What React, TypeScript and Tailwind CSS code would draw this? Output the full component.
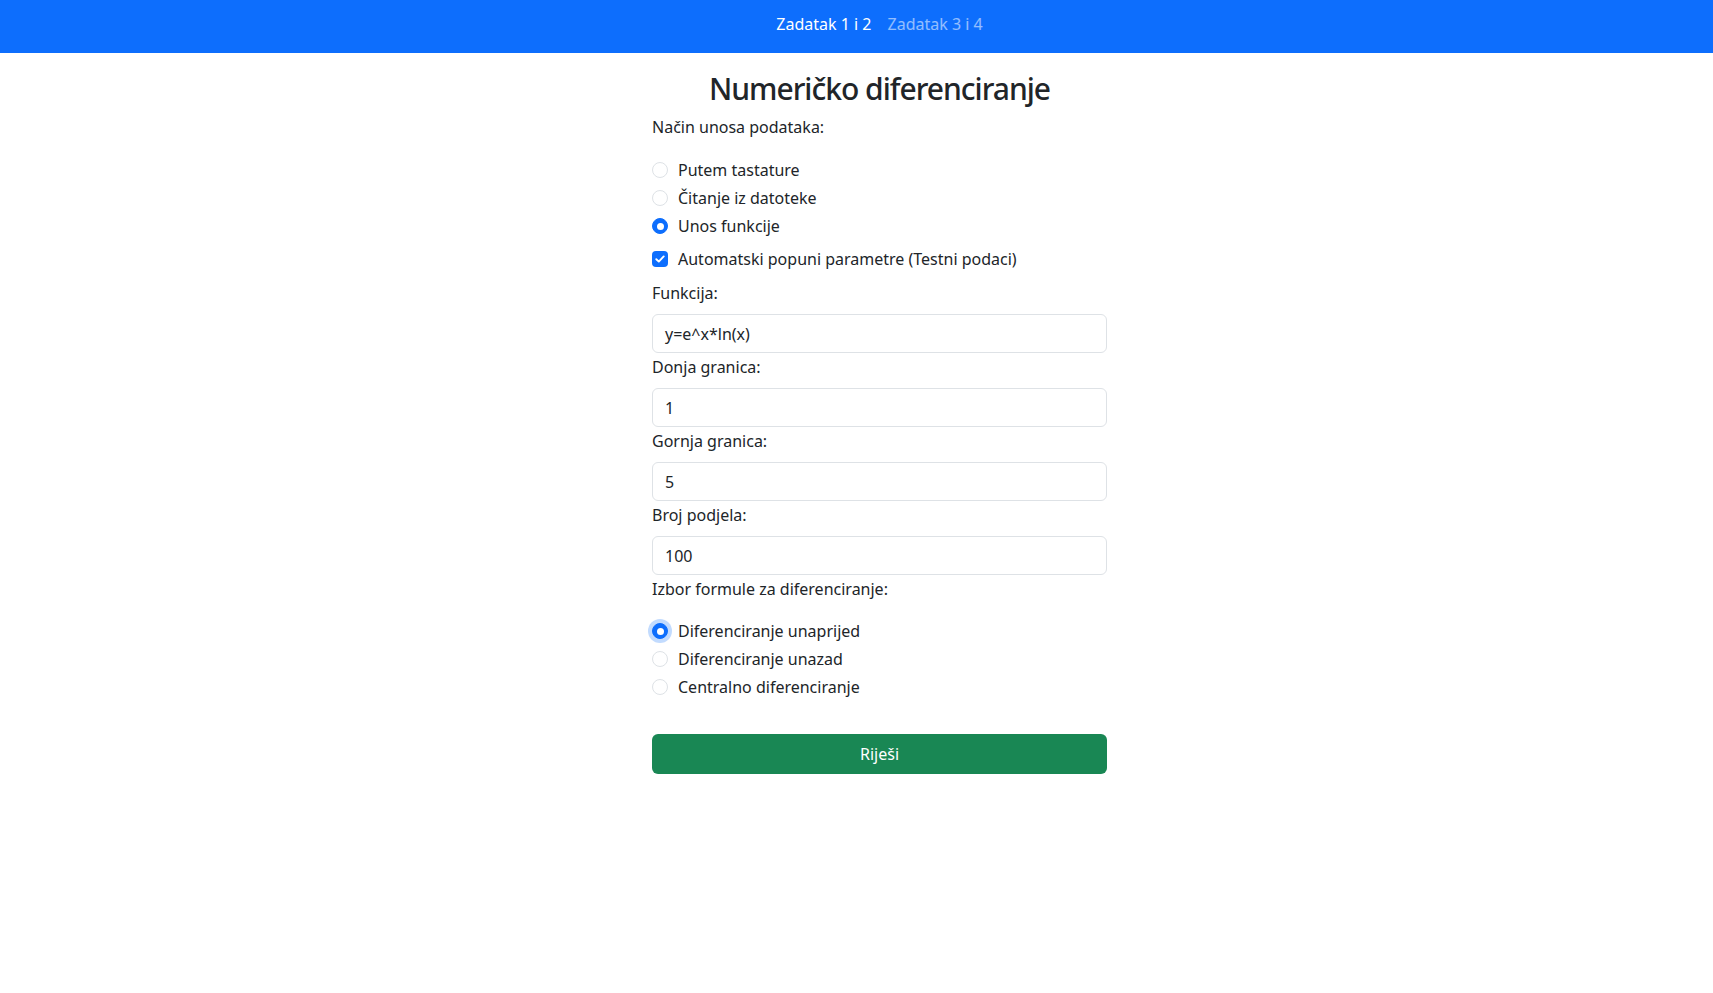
import { useState } from "react"

const font = { fontFamily: '"Noto Sans", "Open Sans", sans-serif' }

const Radio = ({ checked, focused, label }: { checked?: boolean; focused?: boolean; label: string }) => (
    <label className="flex items-center gap-2 h-6 text-base leading-6 text-[#212529]">
        <span
            className={
                "flex items-center justify-center w-4 h-4 rounded-full border " +
                (checked ? "bg-[#0d6efd] border-[#0d6efd] " : "bg-white border-[#dee2e6] ") +
                (focused ? "shadow-[0_0_0_4px_rgba(13,110,253,0.25)]" : "")
            }
        >
            {checked && <span className="w-[7px] h-[7px] rounded-full bg-white" />}
        </span>
        <span className="ml-[2px]">{label}</span>
    </label>
)

const Field = ({ label, value }: { label: string; value: string }) => (
    <div className="flex flex-col">
        <div className="mt-[2px] h-6 leading-6">{label}</div>
        <div className="mt-[9px] h-[39px] border border-[#dee2e6] rounded-[6px] px-3 flex items-center">
            <span>{value}</span>
        </div>
    </div>
)

const App = () => {
    const [mode] = useState("funkcija")

    return <div className="min-h-[993px] bg-white text-[#212529] text-base" style={font}>
        <nav className="h-[53px] bg-[#0d6efd]">
            <div className="ml-[652px] w-[455px] flex justify-center pt-[12px]">
                <a className="px-2 leading-6 text-white">Zadatak 1 i 2</a>
                <a className="px-2 leading-6 text-white/55">Zadatak 3 i 4</a>
            </div>
        </nav>
        <div className="ml-[652px] w-[455px] flex flex-col">
            <h2 className="mt-[17px] h-[38px] text-[30px] leading-[38px] tracking-[-1px] font-medium text-center">
                Numeričko diferenciranje
            </h2>
            <div className="mt-[7px] h-6 leading-6">Način unosa podataka:</div>
            <div className="mt-[19px] flex flex-col gap-1">
                <Radio label="Putem tastature" checked={mode === "tastatura"} />
                <Radio label="Čitanje iz datoteke" checked={mode === "datoteka"} />
                <Radio label="Unos funkcije" checked={mode === "funkcija"} />
            </div>
            <label className="mt-[9px] flex items-center gap-2 h-6 leading-6">
                <span className="flex items-center justify-center w-4 h-4 rounded-[4px] bg-[#0d6efd]">
                    <svg width="10" height="8" viewBox="0 0 10 8" fill="none">
                        <path d="M1.3 4.2 3.8 6.6 8.7 1.4" stroke="white" strokeWidth="1.9" strokeLinecap="round" strokeLinejoin="round" />
                    </svg>
                </span>
                <span className="ml-[2px]">Automatski popuni parametre (Testni podaci)</span>
            </label>
            <div className="mt-[10px] h-6 leading-6">Funkcija:</div>
            <div className="mt-[9px] h-[39px] border border-[#dee2e6] rounded-[6px] px-3 flex items-center">
                <span>y=e^x*ln(x)</span>
            </div>
            <Field label="Donja granica:" value="1" />
            <Field label="Gornja granica:" value="5" />
            <Field label="Broj podjela:" value="100" />
            <div className="mt-[2px] h-6 leading-6">Izbor formule za diferenciranje:</div>
            <div className="mt-[18px] flex flex-col gap-1">
                <Radio label="Diferenciranje unaprijed" checked focused />
                <Radio label="Diferenciranje unazad" />
                <Radio label="Centralno diferenciranje" />
            </div>
            <button className="mt-[35px] h-[40px] rounded-[6px] bg-[#198754] text-white text-base">
                Riješi
            </button>
        </div>
    </div>
}

export default App
